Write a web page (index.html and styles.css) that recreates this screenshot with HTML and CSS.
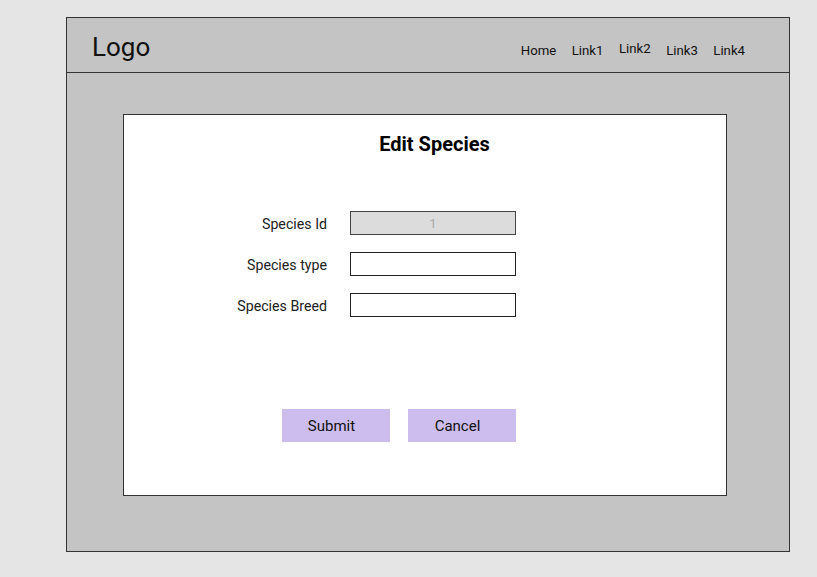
FILE: index.html
```html
<!DOCTYPE html>
<html lang="en">
<head>
<meta charset="utf-8">
<title>Edit Species</title>
<link rel="stylesheet" href="styles.css">
</head>
<body>
<div class="frame">
  <header class="header">
    <div class="logo">Logo</div>
    <nav class="nav">
      <a href="#">Home</a>
      <a href="#">Link1</a>
      <a href="#" class="up">Link2</a>
      <a href="#">Link3</a>
      <a href="#">Link4</a>
    </nav>
  </header>
  <main class="main">
    <section class="card">
      <h1 class="title">Edit Species</h1>
      <form class="form">
        <label class="label" for="sid">Species Id</label>
        <input class="input input-disabled" id="sid" value="1" disabled>
        <label class="label" for="stype">Species type</label>
        <input class="input" id="stype">
        <label class="label" for="sbreed">Species Breed</label>
        <input class="input" id="sbreed">
      </form>
      <div class="actions">
        <button class="btn" type="button">Submit</button>
        <button class="btn" type="button">Cancel</button>
      </div>
    </section>
  </main>
</div>
</body>
</html>
```
FILE: styles.css
```css
* { box-sizing: border-box; }
html, body { margin: 0; padding: 0; }
body {
  background: #e5e5e5;
  font-family: Roboto, "Liberation Sans", sans-serif;
  color: #111;
  width: 817px;
  height: 577px;
  overflow: hidden;
}
.frame {
  margin: 17px 0 0 66px;
  width: 724px;
  height: 535px;
  border: 1px solid #333;
  background: #c4c4c4;
  display: flex;
  flex-direction: column;
}
.header {
  height: 55px;
  border-bottom: 1px solid #333;
  display: flex;
  align-items: center;
  justify-content: space-between;
  padding: 0 44px 0 25px;
}
.logo {
  font-size: 26px;
  color: #111;
  margin-top: 3px;
}
.nav {
  display: flex;
  gap: 15.5px;
  margin-top: 10px;
}
.nav a {
  font-size: 13.2px;
  color: #111;
  text-decoration: none;
}
.nav a.up { position: relative; top: -2px; }
.main {
  flex: 1;
  padding: 41px 62px 55px 56px;
  display: flex;
}
.card {
  flex: 1;
  background: #fff;
  border: 1px solid #333;
  padding-top: 18px;
}
.title {
  margin: 0;
  font-size: 20px;
  font-weight: 700;
  line-height: 22px;
  text-align: center;
  padding-left: 19px;
  color: #000;
}
.form {
  margin-top: 56px;
  display: grid;
  grid-template-columns: 203px 166px;
  column-gap: 23px;
  row-gap: 17px;
  align-items: center;
}
.label {
  text-align: right;
  font-size: 14.2px;
  color: #222;
  padding-top: 1px;
}
.input {
  width: 166px;
  height: 24px;
  border: 1px solid #222;
  background: #fff;
  font-family: inherit;
  font-size: 13px;
  padding: 0 4px;
  margin: 0;
}
.input-disabled {
  background: #dcdcdc;
  color: #aaa;
  text-align: center;
  border-color: #444;
}
.actions {
  margin: 92px 0 0 158px;
  display: flex;
  gap: 18px;
}
.btn {
  width: 108px;
  height: 33px;
  border: none;
  background: #cdbdee;
  font-family: inherit;
  font-size: 15px;
  color: #111;
  padding: 0 9px 0 0;
}
```
